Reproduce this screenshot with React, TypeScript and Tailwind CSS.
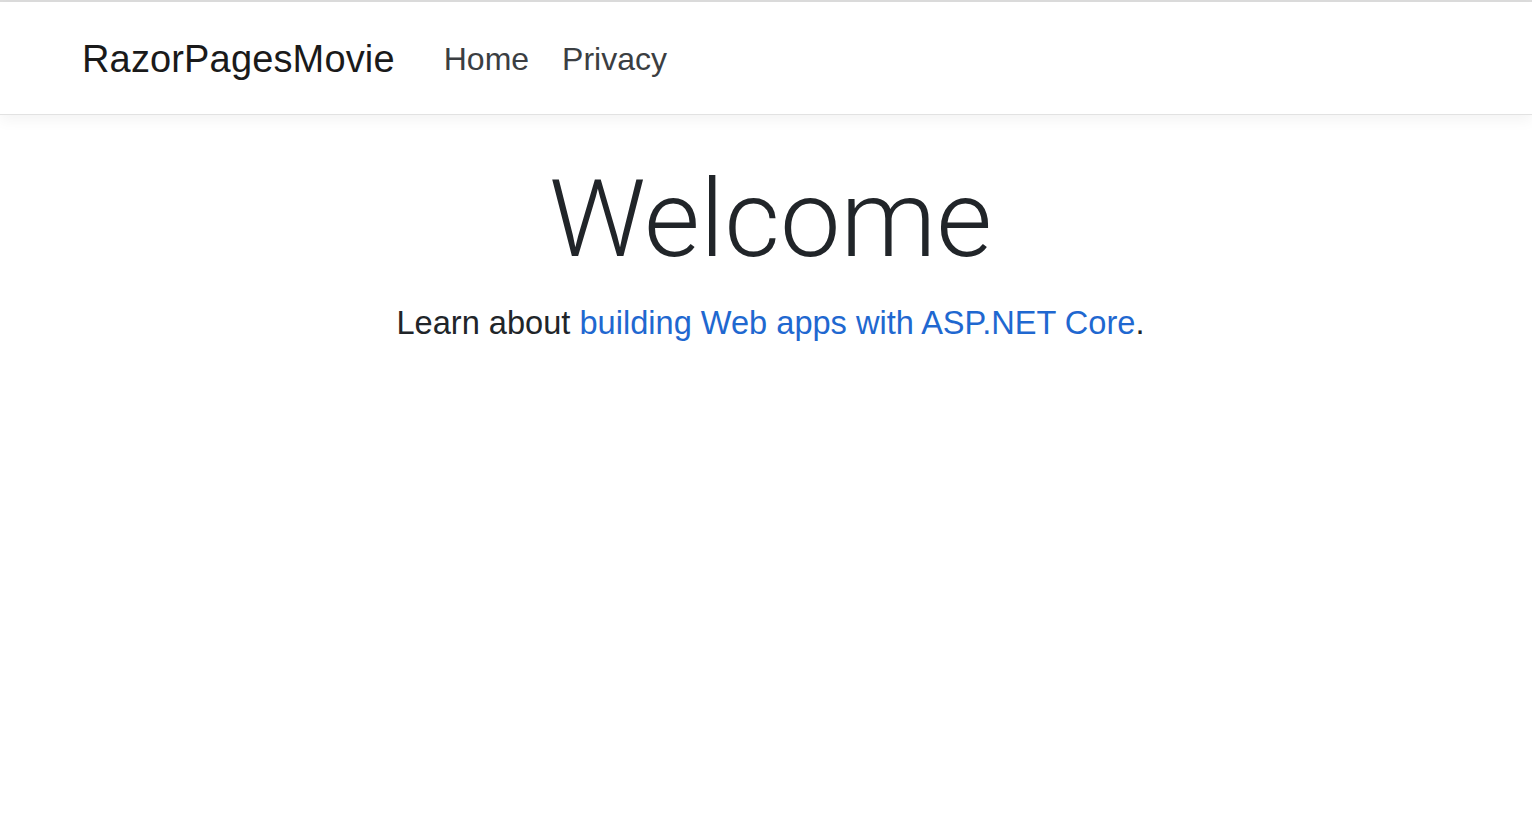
import React from 'react';

const NavBar: React.FC = () => (
  <header className="border-t-2 border-[#dcdcdc]">
    <nav className="h-[113px] flex items-center px-[82px] bg-white border-b border-[#e2e2e2] shadow-[0_5px_14px_rgba(0,0,0,0.05)]">
      <a className="text-[38px] tracking-[0.15px] text-[#1a1a1a] mr-[49px] mt-[2px]">RazorPagesMovie</a>
      <ul className="flex gap-[33px] text-[32px] text-[#3b3e42] mt-[2px]">
        <li>Home</li>
        <li>Privacy</li>
      </ul>
    </nav>
  </header>
);

export default function App() {
  return (
    <div className="min-h-screen bg-white font-['Liberation_Sans',Arial,sans-serif] text-[#212529]">
      <NavBar />
      {/* content sits slightly right of page centre in the reference */}
      <main className="flex flex-col items-center pt-[44px] pl-[9px]">
        <h1 className="font-['Roboto',sans-serif] font-light text-[108px] leading-[120px]">
          Welcome
        </h1>
        <p className="mt-[24px] text-[32.6px] leading-[40px]">
          Learn about <a className="text-[#1f68d0]">building Web apps with ASP.NET Core</a>.
        </p>
      </main>
    </div>
  );
}
